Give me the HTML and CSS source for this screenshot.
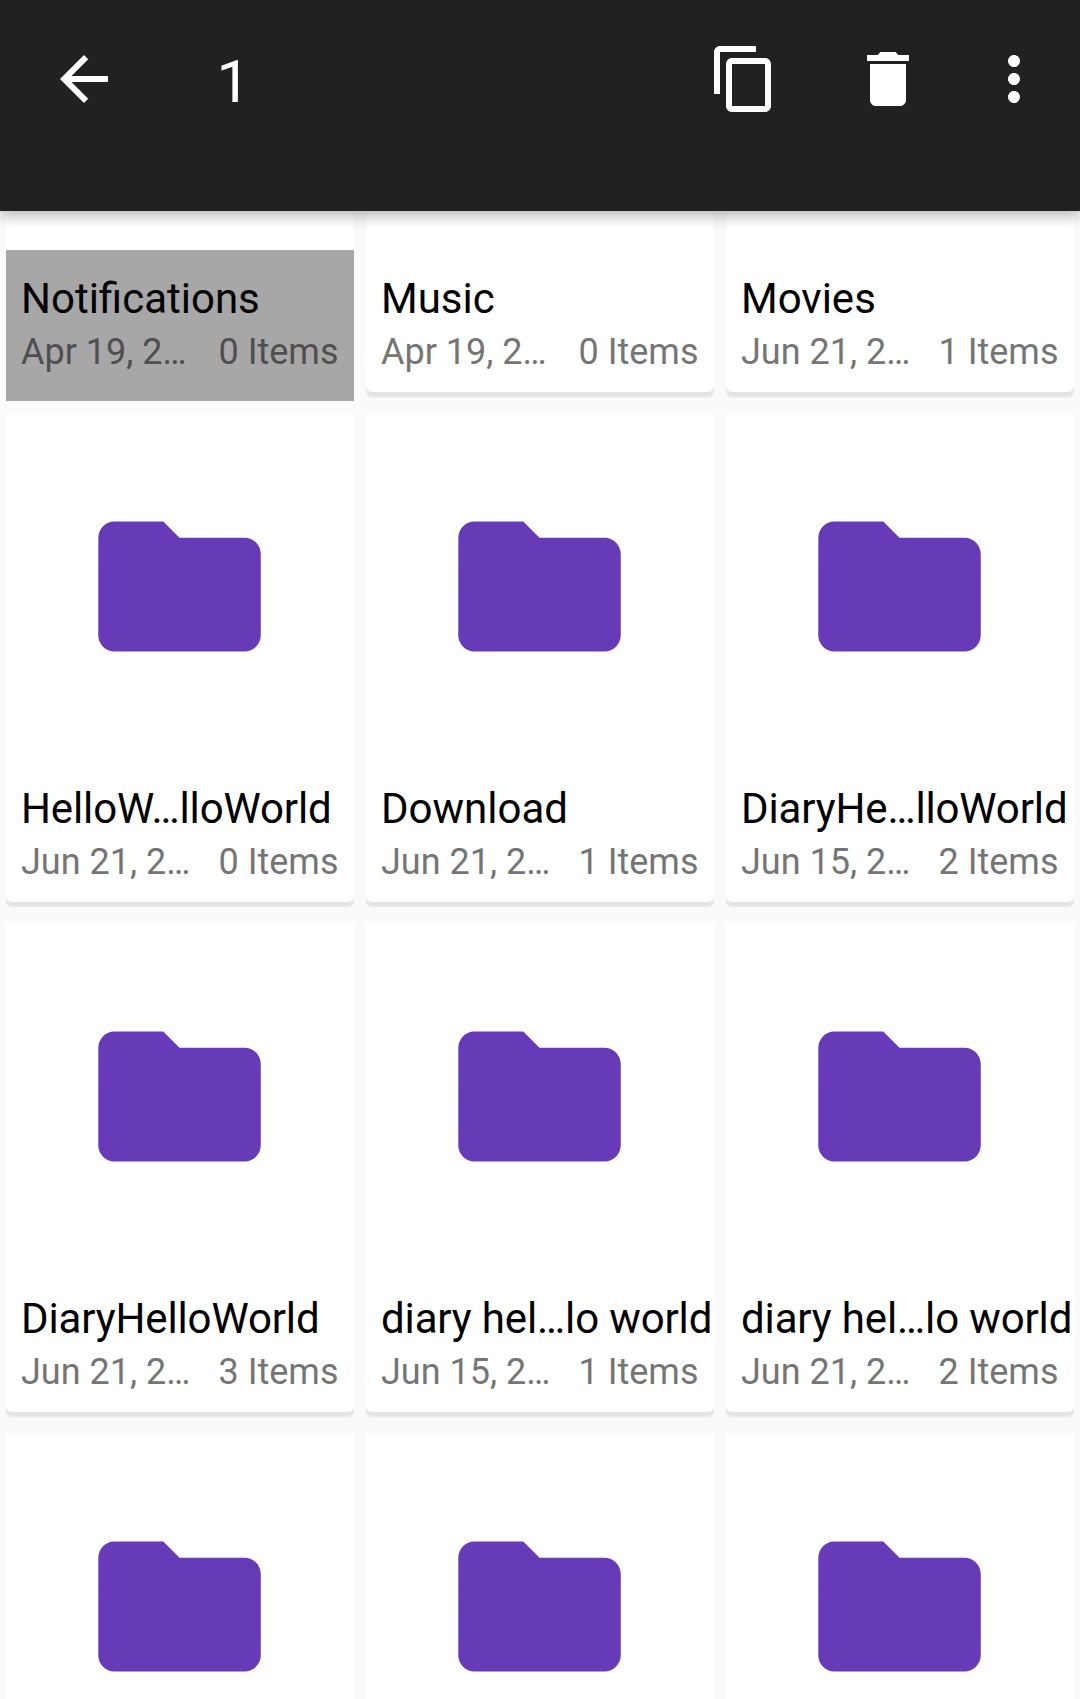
FILE: index.html
```html
<!DOCTYPE html>
<html lang="en">
<head>
<meta charset="utf-8">
<title>Files</title>
<link rel="stylesheet" href="styles.css">
</head>
<body>
<svg class="defs" aria-hidden="true">
  <symbol id="folder" viewBox="0 0 24 24"><path d="M10 4H4c-1.1 0-1.99.9-1.99 2L2 18c0 1.1.9 2 2 2h16c1.1 0 2-.9 2-2V8c0-1.1-.9-2-2-2h-8l-2-2z"/></symbol>
</svg>
<div class="screen">
  <header class="bar">
    <svg class="icon" viewBox="0 0 24 24"><path d="M20 11H7.83l5.59-5.59L12 4l-8 8 8 8 1.41-1.41L7.83 13H20v-2z"/></svg>
    <span class="count">1</span>
    <div class="actions">
      <svg class="icon" viewBox="0 0 24 24"><path d="M16 1H4c-1.1 0-2 .9-2 2v14h2V3h12V1zm3 4H8c-1.1 0-2 .9-2 2v14c0 1.1.9 2 2 2h11c1.1 0 2-.9 2-2V7c0-1.1-.9-2-2-2zm0 16H8V7h11v14z"/></svg>
      <svg class="icon" viewBox="0 0 24 24"><path d="M6 19c0 1.1.9 2 2 2h8c1.1 0 2-.9 2-2V7H6v12zM19 4h-3.500l-1-1h-5l-1 1H5v2h14V4z"/></svg>
      <svg class="icon more" viewBox="0 0 24 24"><path d="M12 8c1.1 0 2-.9 2-2s-.9-2-2-2-2 .9-2 2 .9 2 2 2zm0 2c-1.100 0-2 .9-2 2s.9 2 2 2 2-.9 2-2-.9-2-2-2zm0 6c-1.100 0-2 .9-2 2s.9 2 2 2 2-.9 2-2-.9-2-2-2z"/></svg>
    </div>
  </header>
  <main class="list">
    <div class="grid">
      <div class="cell selected"><div class="card"><div class="thumb"></div><div class="info"><div class="name">Notifications</div><div class="meta"><span>Apr 19, 2…</span><span>0 Items</span></div></div></div></div>
      <div class="cell"><div class="card"><div class="thumb"></div><div class="info"><div class="name">Music</div><div class="meta"><span>Apr 19, 2…</span><span>0 Items</span></div></div></div></div>
      <div class="cell"><div class="card"><div class="thumb"></div><div class="info"><div class="name">Movies</div><div class="meta"><span>Jun 21, 2…</span><span>1 Items</span></div></div></div></div>

      <div class="cell"><div class="card"><div class="thumb"><svg class="folder"><use href="#folder"/></svg></div><div class="info"><div class="name long">HelloW…lloWorld</div><div class="meta"><span>Jun 21, 2…</span><span>0 Items</span></div></div></div></div>
      <div class="cell"><div class="card"><div class="thumb"><svg class="folder"><use href="#folder"/></svg></div><div class="info"><div class="name">Download</div><div class="meta"><span>Jun 21, 2…</span><span>1 Items</span></div></div></div></div>
      <div class="cell"><div class="card"><div class="thumb"><svg class="folder"><use href="#folder"/></svg></div><div class="info"><div class="name long">DiaryHe…lloWorld</div><div class="meta"><span>Jun 15, 2…</span><span>2 Items</span></div></div></div></div>

      <div class="cell"><div class="card"><div class="thumb"><svg class="folder"><use href="#folder"/></svg></div><div class="info"><div class="name long">DiaryHelloWorld</div><div class="meta"><span>Jun 21, 2…</span><span>3 Items</span></div></div></div></div>
      <div class="cell"><div class="card"><div class="thumb"><svg class="folder"><use href="#folder"/></svg></div><div class="info"><div class="name long">diary hel…lo world</div><div class="meta"><span>Jun 15, 2…</span><span>1 Items</span></div></div></div></div>
      <div class="cell"><div class="card"><div class="thumb"><svg class="folder"><use href="#folder"/></svg></div><div class="info"><div class="name long">diary hel…lo world</div><div class="meta"><span>Jun 21, 2…</span><span>2 Items</span></div></div></div></div>

      <div class="cell"><div class="card"><div class="thumb"><svg class="folder"><use href="#folder"/></svg></div></div></div>
      <div class="cell"><div class="card"><div class="thumb"><svg class="folder"><use href="#folder"/></svg></div></div></div>
      <div class="cell"><div class="card"><div class="thumb"><svg class="folder"><use href="#folder"/></svg></div></div></div>
    </div>
  </main>
</div>
</body>
</html>
```

FILE: styles.css
```css
* { box-sizing: border-box; }
body {
  margin: 0;
  background: #fafafa;
  font-family: Roboto, "Liberation Sans", sans-serif;
}
.defs { display: none; }
.screen {
  display: flex;
  flex-direction: column;
  width: 1080px;
  height: 1699px;
  overflow: hidden;
}
.bar {
  position: relative;
  z-index: 1;
  flex: none;
  display: flex;
  align-items: flex-start;
  height: 211px;
  padding: 43px 30px 0 48px;
  background: #212121;
  color: #fff;
  box-shadow: 0 4px 14px rgba(0, 0, 0, .32);
}
.icon { display: block; width: 72px; height: 72px; fill: #fff; }
.count { margin-left: 96.500px; font-size: 60px; line-height: 78px; }
.actions { display: flex; gap: 72px; margin-left: auto; }
.more { margin-left: -18px; }

.list { flex: 1; min-height: 0; overflow: hidden; }
/* the first row is partly scrolled under the bar */
.grid {
  display: grid;
  grid-template-columns: repeat(3, 348px);
  grid-auto-rows: 498px;
  gap: 12px;
  margin-top: -308px;
  padding: 0 6px;
}
.cell { overflow: hidden; }
.card {
  height: 489px;
  background: #fff;
  border-radius: 0 0 6px 6px;
  box-shadow: 0 5px 2px rgba(0, 0, 0, .09);
}
.thumb {
  display: flex;
  align-items: center;
  justify-content: center;
  height: 347px;
  padding-right: 1px;
}
.folder { width: 195px; height: 195px; fill: #673ab7; }
.info { height: 151px; padding: 24px 15.500px 0 15px; }
.selected .info { background: #a7a7a7; }
.name {
  color: #000;
  font-size: 42px;
  line-height: 49px;
  white-space: nowrap;
}
.name.long { letter-spacing: -.13px; }
.meta {
  display: flex;
  justify-content: space-between;
  margin-top: 8px;
  color: #757575;
  font-size: 36px;
  line-height: 42px;
  white-space: nowrap;
}
.selected .meta { color: #4f4f4f; }
```
